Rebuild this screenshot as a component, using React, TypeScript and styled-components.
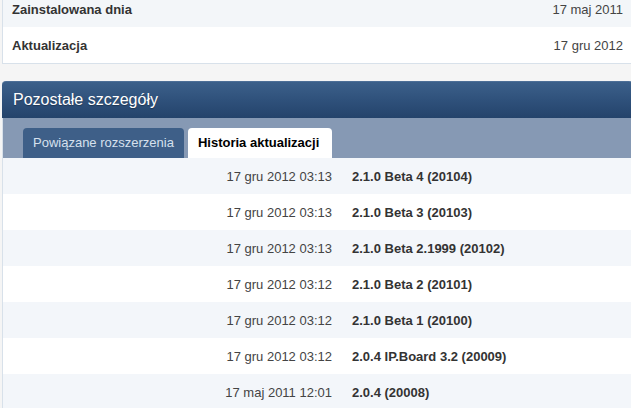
import React from "react";
import styled, { createGlobalStyle } from "styled-components";

const GlobalStyle = createGlobalStyle`
  html, body {
    margin: 0;
    padding: 0;
    background: #f5f5f5;
    overflow: hidden;
    font-family: "Liberation Sans", Arial, sans-serif;
    font-size: 13px;
  }
`;

const Page = styled.div`
  width: 631px;
  padding-left: 2px;
`;

const InfoBox = styled.div`
  margin-top: -10px;
  background: #fff;
  border: 1px solid #d8e1ea;
`;

const InfoRow = styled.div<{ $alt?: boolean }>`
  height: 36px;
  display: flex;
  align-items: center;
  justify-content: space-between;
  padding: 0 9px;
  background: ${(p) => (p.$alt ? "#f3f6f9" : "#ffffff")};
`;

const Label = styled.span`
  font-weight: bold;
  color: #333;
`;

const Value = styled.span`
  color: #444;
`;

const Panel = styled.section`
  margin-top: 17px;
`;

const PanelHeader = styled.h2`
  margin: 0;
  height: 37px;
  box-sizing: border-box;
  padding-left: 11px;
  display: flex;
  align-items: center;
  border-radius: 4px 4px 0 0;
  border-top: 1px solid #4d6f97;
  background: linear-gradient(to bottom, #3c608a 0%, #2f517b 50%, #24436b 100%);
  color: #fff;
  font-size: 16px;
  font-weight: normal;
  text-shadow: 0 1px 1px rgba(0, 0, 0, 0.3);
`;

const PanelBody = styled.div`
  border-left: 1px solid #d8e1ea;
`;

const TabBar = styled.div`
  height: 40px;
  box-sizing: border-box;
  padding: 10px 0 0 20px;
  display: flex;
  align-items: flex-end;
  gap: 4px;
  background: #8699b4;
`;

const Tab = styled.div<{ $active?: boolean }>`
  height: 30px;
  line-height: 30px;
  padding: ${(p) => (p.$active ? "0 13px 0 10px" : "0 10px")};
  border-radius: 4px 4px 0 0;
  font-size: 13px;
  background: ${(p) => (p.$active ? "#ffffff" : "#3e5f88")};
  color: ${(p) => (p.$active ? "#000" : "#d6e1ee")};
  font-weight: ${(p) => (p.$active ? "bold" : "normal")};
`;

const HistoryRow = styled.div<{ $alt?: boolean }>`
  height: 36px;
  display: grid;
  grid-template-columns: 338px 1fr;
  align-items: center;
  background: ${(p) => (p.$alt ? "#f3f6fa" : "#ffffff")};
`;

const DateCell = styled.span`
  text-align: right;
  padding-right: 9px;
  color: #444;
`;

const VersionCell = styled.span`
  padding-left: 11px;
  font-weight: bold;
  color: #333;
`;

const history = [
  ["17 gru 2012 03:13", "2.1.0 Beta 4 (20104)"],
  ["17 gru 2012 03:13", "2.1.0 Beta 3 (20103)"],
  ["17 gru 2012 03:13", "2.1.0 Beta 2.1999 (20102)"],
  ["17 gru 2012 03:12", "2.1.0 Beta 2 (20101)"],
  ["17 gru 2012 03:12", "2.1.0 Beta 1 (20100)"],
  ["17 gru 2012 03:12", "2.0.4 IP.Board 3.2 (20009)"],
  ["17 maj 2011 12:01", "2.0.4 (20008)"],
];

export default function App() {
  return (
    <>
      <GlobalStyle />
      <Page>
        <InfoBox>
          <InfoRow $alt>
            <Label>Zainstalowana dnia</Label>
            <Value>17 maj 2011</Value>
          </InfoRow>
          <InfoRow>
            <Label>Aktualizacja</Label>
            <Value>17 gru 2012</Value>
          </InfoRow>
        </InfoBox>
        <Panel>
          <PanelHeader>Pozostałe szczegóły</PanelHeader>
          <PanelBody>
            <TabBar>
              <Tab>Powiązane rozszerzenia</Tab>
              <Tab $active>Historia aktualizacji</Tab>
            </TabBar>
            {history.map(([date, version], i) => (
              <HistoryRow key={version} $alt={i % 2 === 0}>
                <DateCell>{date}</DateCell>
                <VersionCell>{version}</VersionCell>
              </HistoryRow>
            ))}
          </PanelBody>
        </Panel>
      </Page>
    </>
  );
}
